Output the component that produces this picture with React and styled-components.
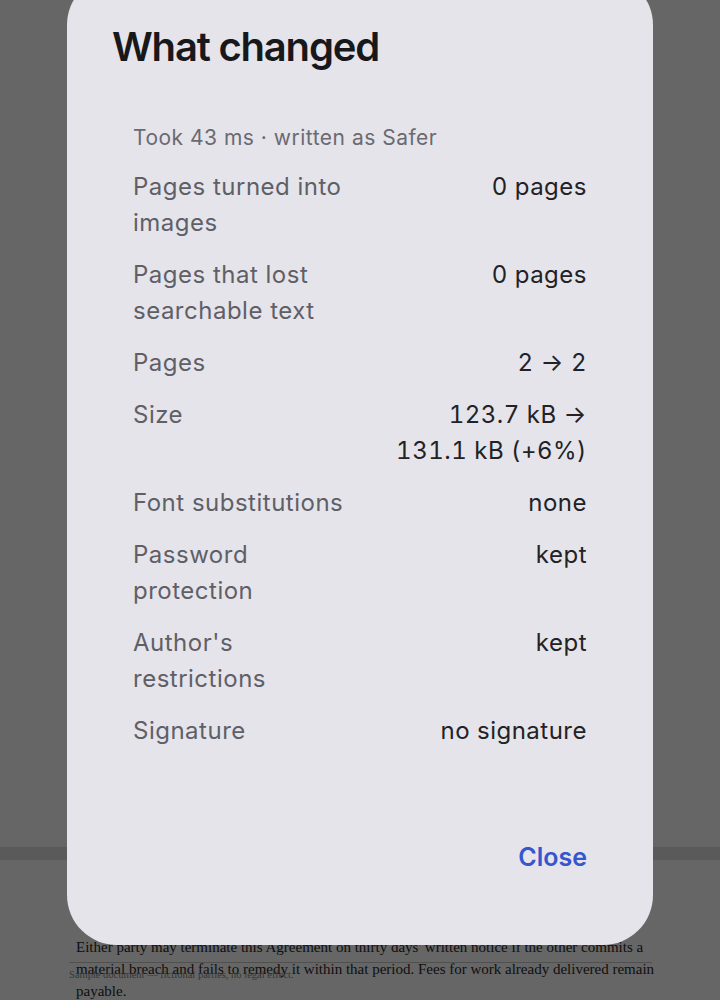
import React from 'react';
import styled, { createGlobalStyle } from 'styled-components';

const GlobalStyle = createGlobalStyle`
  html, body {
    margin: 0;
    padding: 0;
    background: #ffffff;
    overflow: hidden;
  }
  * {
    box-sizing: border-box;
  }
`;

const Page = styled.div`
  height: 100vh;
  display: flex;
  flex-direction: column;
  background: #ffffff;
`;

const Viewer = styled.div`
  flex: 1;
  background: #ffffff;
`;

const Band = styled.div`
  height: 13px;
  background: #e1e1e1;
`;

const DocArea = styled.div`
  position: relative;
  height: 140px;
  padding: 76px 64px 0 76px;
`;

const Paragraph = styled.p`
  margin: 0;
  font-family: "Liberation Serif", "Times New Roman", serif;
  font-size: 15px;
  line-height: 22px;
  color: #2a2a2a;
`;

const DocFooter = styled.div`
  position: absolute;
  left: 69px;
  right: 68px;
  top: 102px;
  border-top: 1px solid #c8c8c8;
  padding-top: 6px;
  font-family: "Liberation Serif", "Times New Roman", serif;
  font-size: 10.5px;
  color: #8a8a8a;
`;

const Overlay = styled.div`
  position: fixed;
  inset: 0;
  background: rgba(0, 0, 0, 0.6);
  display: flex;
  justify-content: center;
  align-items: flex-start;
`;

const Dialog = styled.div`
  width: 586px;
  height: 970px;
  margin-top: -25px;
  border-radius: 50px;
  background: #e5e4ea;
  padding: 48px 45px 0;
  display: flex;
  flex-direction: column;
  font-family: Inter, "Noto Sans", sans-serif;
`;

const Title = styled.h2`
  margin: 0;
  font-size: 40px;
  line-height: 48px;
  font-weight: 600;
  letter-spacing: -1.2px;
  color: #18181b;
`;

const Body = styled.div`
  margin: 52px 21px 0;
  display: flex;
  flex-direction: column;
  gap: 16px;
`;

const Meta = styled.div`
  font-size: 21px;
  line-height: 30px;
  letter-spacing: 0.5px;
  color: #6a6a72;
`;

const Row = styled.div`
  display: grid;
  grid-template-columns: 1fr 1fr;
  column-gap: 16px;
  font-size: 24px;
  line-height: 36px;
  letter-spacing: 0.5px;
`;

const Label = styled.div`
  color: #5f5f67;
`;

const Value = styled.div`
  color: #222226;
  text-align: right;
  font-variant-numeric: tabular-nums;
`;

const Actions = styled.div`
  margin: auto 21px 0;
  padding-bottom: 70px;
  display: flex;
  justify-content: flex-end;
`;

const TextButton = styled.button`
  border: 0;
  background: none;
  padding: 0;
  font-family: inherit;
  font-size: 25px;
  line-height: 36px;
  font-weight: 600;
  color: #3556cc;
  cursor: pointer;
`;

const rows = [
  ['Pages turned into images', '0 pages'],
  ['Pages that lost searchable text', '0 pages'],
  ['Pages', '2 \u2192 2'],
  ['Size', '123.7\u00a0kB \u2192 131.1\u00a0kB\u00a0(+6%)'],
  ['Font substitutions', 'none'],
  ['Password protection', 'kept'],
  ["Author's restrictions", 'kept'],
  ['Signature', 'no signature'],
];

const App = () => (
  <>
    <GlobalStyle />
    <Page>
      <Viewer />
      <Band />
      <DocArea>
        <Paragraph>
          Either party may terminate this Agreement on thirty days' written notice if the other commits a
          material breach and fails to remedy it within that period. Fees for work already delivered remain
          payable.
        </Paragraph>
        <DocFooter>Sample document — fictional parties, no legal effect.</DocFooter>
      </DocArea>
    </Page>
    <Overlay>
      <Dialog role="dialog">
        <Title>What changed</Title>
        <Body>
          <Meta>Took 43 ms · written as Safer</Meta>
          {rows.map(([label, value]) => (
            <Row key={label}>
              <Label>{label}</Label>
              <Value>{value}</Value>
            </Row>
          ))}
        </Body>
        <Actions>
          <TextButton>Close</TextButton>
        </Actions>
      </Dialog>
    </Overlay>
  </>
);

export default App;
